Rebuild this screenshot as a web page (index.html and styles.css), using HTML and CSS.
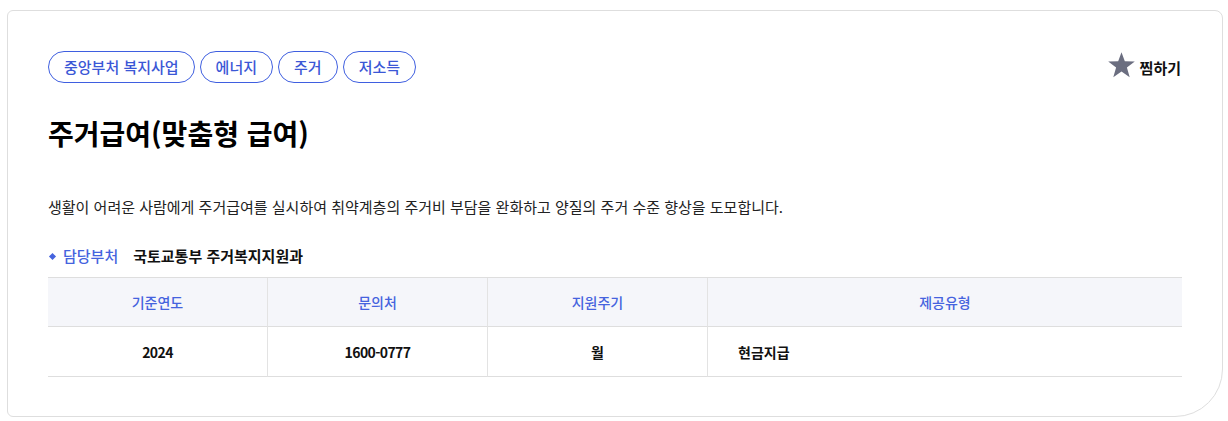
FILE: index.html
```html
<!DOCTYPE html>
<html lang="ko">
<head>
<meta charset="utf-8">
<title>주거급여(맞춤형 급여)</title>
<link rel="stylesheet" href="styles.css">
</head>
<body>
<div class="card">
  <div class="top">
    <ul class="tags">
      <li class="tag">중앙부처 복지사업</li>
      <li class="tag">에너지</li>
      <li class="tag">주거</li>
      <li class="tag">저소득</li>
    </ul>
    <button class="fav" type="button">
      <svg class="star" width="27" height="26" viewBox="0 0 26 25" aria-hidden="true">
        <path d="M13 0.3 L16.2 9 L25.8 9.2 L18.2 15 L20.9 24.3 L13 18.8 L5.1 24.3 L7.8 15 L0.2 9.2 L9.8 9 Z" fill="#6b6e80"/>
      </svg>
      <span>찜하기</span>
    </button>
  </div>
  <h1 class="title">주거급여(맞춤형 급여)</h1>
  <p class="desc">생활이 어려운 사람에게 주거급여를 실시하여 취약계층의 주거비 부담을 완화하고 양질의 주거 수준 향상을 도모합니다.</p>
  <div class="dept">
    <span class="dept-label">담당부처</span>
    <span class="dept-value">국토교통부 주거복지지원과</span>
  </div>
  <div class="table">
    <div class="th">기준연도</div>
    <div class="th">문의처</div>
    <div class="th">지원주기</div>
    <div class="th">제공유형</div>
    <div class="td num">2024</div>
    <div class="td num">1600-0777</div>
    <div class="td">월</div>
    <div class="td left">현금지급</div>
  </div>
</div>
</body>
</html>
```

FILE: styles.css
```css
* { box-sizing: border-box; }
html, body { margin: 0; padding: 0; background: #fff; }
body {
  font-family: "Noto Sans CJK KR", "Noto Sans", sans-serif;
  color: #111;
  padding: 10px 5px 4px 7px;
}
.card {
  border: 1px solid #dedede;
  border-radius: 6px 8px 48px 6px;
  padding: 40px 40px 39px 40px;
  width: 1216px;
  height: 407px;
}
.top {
  display: flex;
  justify-content: space-between;
  align-items: center;
  height: 32px;
}
.tags {
  display: flex;
  gap: 5px;
  list-style: none;
  margin: 0;
  padding: 0;
}
.tag {
  height: 32px;
  line-height: 30px;
  padding: 0 15px;
  border: 1px solid #3f5fe0;
  border-radius: 16px;
  color: #3b57d6;
  font-size: 15px;
  font-weight: 500;
}
.fav {
  display: flex;
  align-items: center;
  gap: 5px;
  border: 0;
  background: none;
  padding: 0;
  margin-right: 1px;
  font-family: inherit;
  font-size: 15px;
  font-weight: 700;
  color: #111;
}
.star { position: relative; top: -2px; flex: none; }
.title {
  margin: 32px 0 0;
  font-size: 28px;
  line-height: 36px;
  font-weight: 700;
  color: #000;
}
.desc {
  margin: 45px 0 0;
  font-size: 15px;
  line-height: 22px;
  color: #222;
}
.dept {
  margin-top: 27px;
  display: flex;
  align-items: center;
  font-size: 15px;
  line-height: 22px;
  font-weight: 700;
}
.dept-label {
  position: relative;
  padding-left: 15px;
  color: #4563de;
  font-weight: 500;
  margin-right: 15px;
}
.dept-label::before {
  content: "";
  position: absolute;
  left: 2px;
  top: 9px;
  width: 5px;
  height: 5px;
  background: #4563de;
  transform: rotate(45deg);
}
.dept-value { color: #111; }
.table {
  margin-top: 10px;
  display: grid;
  grid-template-columns: 220px 220px 220px 1fr;
  border-top: 1px solid #dedede;
}
.th, .td {
  display: flex;
  align-items: center;
  justify-content: center;
  font-size: 14px;
  border-right: 1px solid #e3e3e3;
  border-bottom: 1px solid #dedede;
}
.th:nth-child(4n), .td:nth-child(4n) { border-right: 0; }
.th {
  height: 49px;
  background: #f5f6fa;
  color: #4563de;
  font-weight: 500;
}
.td {
  height: 50px;
  font-weight: 700;
  color: #111;
}
.td.num { letter-spacing: -0.6px; }
.td.left {
  justify-content: flex-start;
  padding-left: 30px;
}
```
